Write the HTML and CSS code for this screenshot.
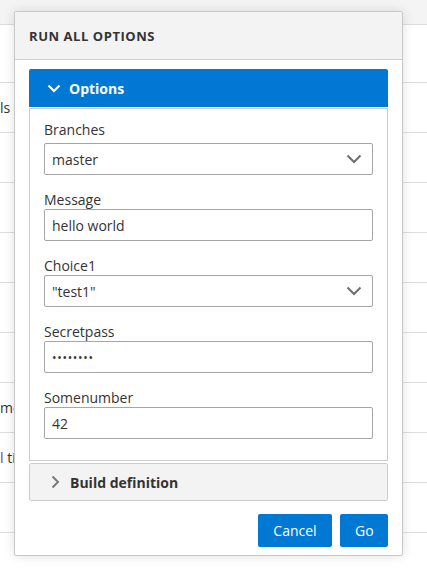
FILE: index.html
```html
<!DOCTYPE html>
<html>
<head>
<meta charset="utf-8">
<link rel="stylesheet" href="styles.css">
</head>
<body>
<div class="page">
  <div class="page-top"></div>
  <div class="row row-first"></div>
  <div class="row"><span class="cell">ls <span class="paren">(</span></span></div>
  <div class="row"></div>
  <div class="row"></div>
  <div class="row"></div>
  <div class="row"></div>
  <div class="row"></div>
  <div class="row"><span class="cell">me</span></div>
  <div class="row"><span class="cell"><span class="lnk">l</span> ti</span></div>
  <div class="row"></div>
</div>

<div class="dialog">
  <div class="dialog-header">RUN ALL OPTIONS</div>
  <div class="dialog-body">
    <div class="section-head open">
      <svg class="chev" width="14" height="14" viewBox="0 0 14 14"><path d="M1.5 4.5 L7 10 L12.5 4.5" fill="none" stroke="#fff" stroke-width="2.2"/></svg>
      <span>Options</span>
    </div>
    <div class="panel">
      <div class="field">
        <div class="label">Branches</div>
        <div class="input select"><span>master</span>
          <svg width="16" height="10" viewBox="0 0 16 10"><path d="M1.5 1.5 L8 8 L14.5 1.5" fill="none" stroke="#6e6e6e" stroke-width="2"/></svg>
        </div>
      </div>
      <div class="field">
        <div class="label">Message</div>
        <div class="input"><span>hello world</span></div>
      </div>
      <div class="field">
        <div class="label">Choice1</div>
        <div class="input select"><span>"test1"</span>
          <svg width="16" height="10" viewBox="0 0 16 10"><path d="M1.5 1.5 L8 8 L14.5 1.5" fill="none" stroke="#6e6e6e" stroke-width="2"/></svg>
        </div>
      </div>
      <div class="field">
        <div class="label">Secretpass</div>
        <div class="input"><span class="dots">••••••••</span></div>
      </div>
      <div class="field">
        <div class="label">Somenumber</div>
        <div class="input"><span>42</span></div>
      </div>
    </div>
    <div class="section-head closed">
      <svg class="chev" width="14" height="14" viewBox="0 0 14 14"><path d="M4.5 1.5 L10 7 L4.5 12.5" fill="none" stroke="#7a7a7a" stroke-width="2"/></svg>
      <span>Build definition</span>
    </div>
    <div class="actions">
      <button class="btn">Cancel</button>
      <button class="btn">Go</button>
    </div>
  </div>
</div>
</body>
</html>
```
FILE: styles.css
```css
* { box-sizing: border-box; }
html, body { margin: 0; padding: 0; }
body {
  width: 427px;
  height: 569px;
  overflow: hidden;
  font-family: "Open Sans", "Noto Sans", sans-serif;
  color: #333;
  background: #fff;
}
.page { display: flex; flex-direction: column; }
.page-top {
  height: 25px;
  background: #f4f4f4;
  border-bottom: 1px solid #dcdcdc;
}
.row {
  height: 50px;
  border-bottom: 1px solid #dedede;
  display: flex;
  align-items: center;
  font-size: 14px;
  color: #333;
  flex-shrink: 0;
}
.row-first { height: 58px; }
.cell { margin-left: 0; white-space: nowrap; }
.paren { color: #d67f1a; }
.lnk { color: #7a3a9a; }

.dialog {
  position: absolute;
  left: 14px;
  top: 11px;
  width: 389px;
  height: 545px;
  background: #fff;
  border: 1px solid #c8c8c8;
  border-radius: 2px;
  box-shadow: 0 0 12px rgba(0,0,0,0.12);
  display: flex;
  flex-direction: column;
}
.dialog-header {
  height: 48px;
  background: #f3f3f3;
  border-bottom: 1px solid #cfcfcf;
  padding: 0 14px;
  display: flex;
  align-items: center;
  font-size: 13px;
  font-weight: 700;
  letter-spacing: 0.55px;
  color: #333;
}
.dialog-body {
  padding: 9px 14px 0 14px;
  display: flex;
  flex-direction: column;
}
.section-head {
  height: 38px;
  display: flex;
  align-items: center;
  padding-left: 18px;
  gap: 8px;
  font-size: 14px;
  font-weight: 700;
  border-radius: 2px 2px 0 0;
}
.section-head.open {
  background: #0078d4;
  color: #fff;
}
.section-head.closed {
  margin-top: 2px;
  background: #f3f3f3;
  border: 1px solid #cdcdcd;
  border-radius: 2px;
  color: #333;
  padding-left: 18px;
}
.chev { flex-shrink: 0; }
.panel {
  margin-top: 1px;
  border: 1px solid #cdcdcd;
  padding: 10px 14px 11px 14px;
  display: flex;
  flex-direction: column;
}
.field {
  display: flex;
  flex-direction: column;
  margin-bottom: 10px;
}
.field + .field { margin-top: 4px; }
.label {
  height: 22px;
  line-height: 22px;
  font-size: 14px;
  color: #333;
  margin-bottom: 2px;
}
.field + .field .label { margin-bottom: -2px; }
.input {
  height: 32px;
  border: 1px solid #a6a6a6;
  border-radius: 2px;
  padding: 0 10px 0 7px;
  display: flex;
  align-items: center;
  justify-content: space-between;
  font-size: 14px;
  color: #333;
}
.dots { font-size: 12px; letter-spacing: 0.7px; }
.actions {
  display: flex;
  justify-content: flex-end;
  gap: 8px;
  margin-top: 13px;
}
.btn {
  height: 33px;
  background: #0078d4;
  color: #fff;
  border: none;
  border-radius: 2px;
  font-family: "Open Sans", "Noto Sans", sans-serif;
  font-size: 14px;
  padding: 0 15px;
}
.btn:first-child { width: 74px; }
.btn:last-child { width: 48px; }
```
